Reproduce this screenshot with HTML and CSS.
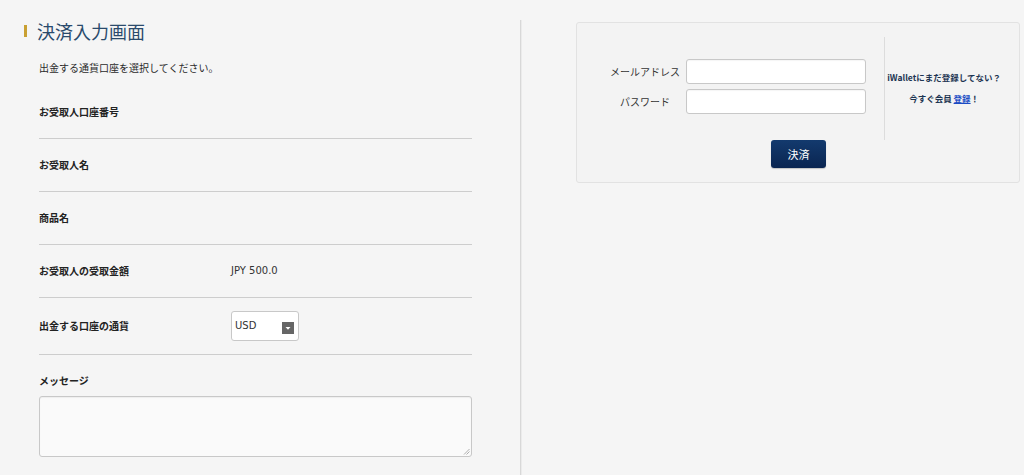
FILE: index.html
```html
<!DOCTYPE html>
<html lang="ja">
<head>
<meta charset="utf-8">
<link rel="stylesheet" href="styles.css">
</head>
<body>
<div class="page">
  <div class="main">
    <h1 class="title"><span class="title-bar"></span>決済入力画面</h1>
    <p class="lead">出金する通貨口座を選択してください。</p>
    <div class="form">
      <div class="row"><div class="label">お受取人口座番号</div><div class="value"></div></div>
      <div class="row"><div class="label">お受取人名</div><div class="value"></div></div>
      <div class="row"><div class="label">商品名</div><div class="value"></div></div>
      <div class="row"><div class="label">お受取人の受取金額</div><div class="value">JPY 500.0</div></div>
      <div class="row row-select">
        <div class="label">出金する口座の通貨</div>
        <div class="value">
          <div class="select"><span class="select-text">USD</span><span class="select-arrow"><svg width="12" height="12" viewBox="0 0 12 12"><rect width="12" height="12" fill="#666"/><path d="M3.5 5 L8.5 5 L6 7.8 Z" fill="#fff"/></svg></span></div>
        </div>
      </div>
      <div class="message">
        <div class="label">メッセージ</div>
        <div class="textarea"><svg class="grip" width="7" height="7" viewBox="0 0 7 7"><path d="M1 6.5 L6.5 1 M3.5 6.5 L6.5 3.5" stroke="#999" stroke-width="0.8"/></svg></div>
      </div>
    </div>
  </div>
  <div class="aside">
    <div class="box">
      <div class="login">
        <div class="field"><div class="flabel">メールアドレス</div><div class="input"></div></div>
        <div class="field"><div class="flabel">パスワード</div><div class="input"></div></div>
        <div class="btn">決済</div>
      </div>
      <div class="side">
        <p class="side-q">iWalletにまだ登録してない？</p>
        <p class="side-a">今すぐ会員 <a class="link" href="#">登録</a>！</p>
      </div>
    </div>
  </div>
</div>
</body>
</html>
```

FILE: styles.css
```css
* { box-sizing: border-box; }
html, body { margin: 0; padding: 0; }
body {
  background: #f5f5f5;
  font-family: "DejaVu Sans", "Noto Sans CJK JP", sans-serif;
  color: #333;
  font-size: 10px;
  overflow: hidden;
}
.page { display: flex; align-items: flex-start; }
.main {
  width: 521px;
  margin-top: 20px;
  min-height: 470px;
  border-right: 1px solid #d8d8d8;
  box-shadow: 1px 0 0 #ebebeb;
}
.title {
  margin: 0 0 0 24px;
  display: flex;
  align-items: center;
  font-family: "Noto Sans CJK JP", sans-serif;
  font-weight: normal;
  font-size: 18px;
  line-height: 22px;
  height: 22px;
  color: #2a4a6c;
}
.title-bar {
  display: inline-block;
  width: 3px;
  height: 12px;
  background: #c9a032;
  margin-right: 10px;
}
.lead {
  margin: 20px 0 12px 39px;
  font-family: "Noto Sans CJK JP", sans-serif;
  font-size: 10px;
  line-height: 12px;
  color: #2a2a2a;
}
.form { margin-left: 39px; width: 433px; }
.row {
  display: flex;
  align-items: center;
  padding: 20px 0;
  border-bottom: 1px solid #cdcdcd;
  line-height: 12px;
}
.row-select { padding: 13px 0; }
.label {
  width: 192px;
  font-family: "Noto Sans CJK JP", sans-serif;
  font-weight: bold;
  font-size: 10px;
  line-height: 12px;
  color: #222;
}
.value { font-family: "DejaVu Sans", sans-serif; font-size: 10px; color: #333; }
.select {
  width: 68px;
  height: 30px;
  border: 1px solid #c8c8c8;
  border-radius: 3px;
  background: #fff;
  display: flex;
  align-items: center;
  justify-content: space-between;
  padding: 0 4px 0 3px;
}
.select-text { font-family: "DejaVu Sans", sans-serif; font-size: 10px; color: #333; }
.select-arrow { display: flex; margin-top: 3px; }
.message { padding-top: 20px; }
.message .label { margin-bottom: 9px; width: auto; }
.textarea {
  position: relative;
  width: 433px;
  height: 61px;
  background: #fafafa;
  border: 1px solid #c8c8c8;
  border-radius: 3px;
  box-shadow: inset 0 1px 1px rgba(0,0,0,0.05);
}
.grip { position: absolute; right: 1px; bottom: 1px; }
.aside { margin-left: 55px; }
.box {
  margin-top: 22px;
  width: 444px;
  height: 161px;
  border: 1px solid #e2e2e2;
  border-radius: 3px;
  background: #f3f3f3;
  display: flex;
  align-items: flex-start;
  padding: 14px 16px 14px 0;
}
.login {
  width: 308px;
  padding-top: 22px;
}
.field {
  display: flex;
  align-items: center;
  margin-bottom: 5px;
}
.flabel {
  width: 80px;
  margin-left: 28px;
  text-align: center;
  font-family: "Noto Sans CJK JP", sans-serif;
  font-size: 10px;
  color: #333;
}
.input {
  width: 180px;
  height: 25px;
  margin-left: 1px;
  background: #fff;
  border: 1px solid #c8c8c8;
  border-radius: 3px;
  box-shadow: inset 0 1px 1px rgba(0,0,0,0.04);
}
.btn {
  margin: 26px 0 0 194px;
  width: 55px;
  height: 28px;
  border-radius: 3px;
  background: linear-gradient(#133a6e, #0a2551);
  color: #fff;
  font-family: "Noto Sans CJK JP", sans-serif;
  font-size: 11px;
  display: flex;
  align-items: center;
  justify-content: center;
  box-shadow: 0 1px 1px rgba(0,0,0,0.2);
}
.side {
  width: 119px;
  height: 103px;
  border-left: 1px solid #dcdcdc;
  text-align: center;
  padding-top: 34px;
}
.side-q, .side-a {
  margin: 0;
  font-family: "Noto Sans CJK JP", sans-serif;
  font-weight: bold;
  font-size: 8.5px;
  line-height: 12px;
  color: #1d3552;
  white-space: nowrap;
}
.side-a { margin-top: 9px; }
.link { color: #1a4bc4; text-decoration: underline; }
```
